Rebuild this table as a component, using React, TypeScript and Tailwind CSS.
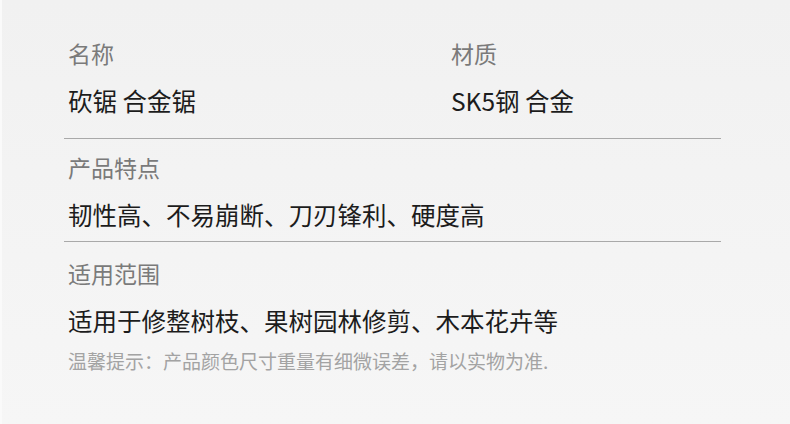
const font = { fontFamily: '"Noto Sans CJK SC", "Noto Sans", sans-serif' };

interface FieldProps {
  label: string;
  value: string;
}

const Field = ({ label, value }: FieldProps) => (
  <div className="pl-1">
    <p className="text-[23px] leading-[30px] text-[#7a7a7a]">{label}</p>
    <p className="mt-4 text-[24.5px] leading-[34px] text-[#1c1c1c]">{value}</p>
  </div>
);

export default function App() {
  return (
    <div className="w-[790px] h-[424px] bg-gradient-to-b from-[#f1f1f1] to-[#f6f6f6] border-l-2 border-[#fafafa] overflow-hidden" style={font}>
      <div className="ml-[62px] w-[657px] pt-[38px]">
        <div className="grid grid-cols-[383px_1fr] pb-5 border-b border-[#a9a9a9]">
          <Field label="名称" value="砍锯 合金锯" />
          <Field label="材质" value="SK5钢 合金" />
        </div>
        <div className="pt-[13px] pb-[9px] border-b border-[#a9a9a9]">
          <Field label="产品特点" value="韧性高、不易崩断、刀刃锋利、硬度高" />
        </div>
        <div className="pt-4">
          <Field label="适用范围" value="适用于修整树枝、果树园林修剪、木本花卉等" />
          <p className="pl-1 mt-[11px] text-[19px] leading-6 text-[#a3a3a3]">温馨提示：产品颜色尺寸重量有细微误差，请以实物为准.</p>
        </div>
      </div>
    </div>
  );
}
